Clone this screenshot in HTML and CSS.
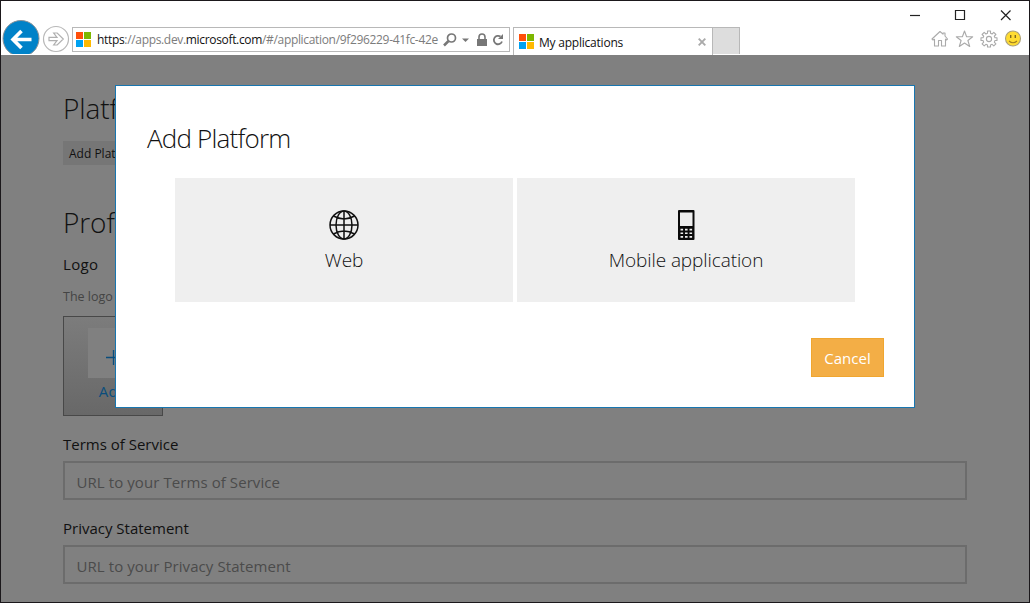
FILE: index.html
```html
<!DOCTYPE html>
<html lang="en">
<head>
<meta charset="utf-8">
<title>My applications</title>
<link rel="stylesheet" href="styles.css">
</head>
<body>
<div class="window">
  <header class="chrome">
    <svg class="back" width="38" height="34" viewBox="0 0 38 34"><circle cx="19" cy="18.5" r="18" fill="#0082c8" stroke="#8a9298" stroke-width="1"/><path d="M29.500 19.500H11.500M19.500 11L11 19.500L19.500 28" fill="none" stroke="#fff" stroke-width="3.600"/></svg>
    <svg class="forward" width="28" height="28" viewBox="0 0 28 28"><circle cx="14" cy="14" r="12.500" fill="#fff" stroke="#b8b8b8" stroke-width="1.200"/><path d="M7 12.300H15L11.700 8H15.200L21.300 14L15.200 20H11.700L15 15.700H7Z" fill="#fff" stroke="#b0b0b0" stroke-width="1.200"/></svg>
    <div class="address">
      <svg class="flag" width="15" height="15" viewBox="0 0 15 15"><path fill="#ff4f0a" d="M0 0h7v7H0z"/><path fill="#7db700" d="M8 0h7v7H8z"/><path fill="#00a1f1" d="M0 8h7v7H0z"/><path fill="#ffb900" d="M8 8h7v7H8z"/></svg>
      <div class="url"><b>https</b>://apps.dev.<b>microsoft.com</b>/#/application/9f296229-41fc-42e</div>
      <svg class="tools" width="64" height="16" viewBox="0 0 64 16" fill="none" stroke="#777"><circle cx="8.500" cy="6" r="4" stroke-width="1.700"/><path d="M5.500 9L1 13.500" stroke-width="2.500"/><path d="M19 6.500h7l-3.500 3.500z" fill="#777" stroke="none"/><path d="M34 7h10v7H34z" fill="#777" stroke="none"/><path d="M36 7.500V5a3 3 0 0 1 6 0V7.500" stroke-width="1.600"/><path d="M57.500 4.600A4.200 4.200 0 1 0 59 9.500" stroke-width="1.800"/><path d="M60 2V7H55z" fill="#777" stroke="none"/></svg>
    </div>
    <div class="tab">
      <svg class="flag" width="15" height="15" viewBox="0 0 15 15"><path fill="#ff4f0a" d="M0 0h7v7H0z"/><path fill="#7db700" d="M8 0h7v7H8z"/><path fill="#00a1f1" d="M0 8h7v7H0z"/><path fill="#ffb900" d="M8 8h7v7H8z"/></svg>
      <span class="tab-title">My applications</span>
      <svg class="tab-close" width="8" height="8" viewBox="0 0 8 8"><path d="M.7.700L7.300 7.300M7.300.7L.7 7.300" stroke="#aaa" stroke-width="1.900"/></svg>
    </div>
    <div class="new-tab"></div>
    <div class="chrome-right">
      <svg class="controls" width="105" height="12" viewBox="0 0 105 12" fill="none" stroke="#222" stroke-width="1.200"><path d="M0 6.500H10"/><path d="M45.500 1.500h9v9h-9z"/><path d="M91 1.500l9.500 9.500m0-9.500l-9.500 9.500"/></svg>
      <svg class="icons" width="92" height="18" viewBox="0 0 92 18" fill="none" stroke="#aaa" stroke-width="1.100" stroke-linejoin="round">
        <path d="M1 9L9 1.500L12 4.200V3H14V6L16.500 9L15.500 10L14.500 9.200V16H10.500V10.500H7.500V16H3.500V9.200L2 10Z"/>
        <path d="M33.500 1L35.600 6.800H41.700L36.900 10.500L38.700 16.500L33.500 13L28.300 16.500L30.100 10.500L25.300 6.800H31.400Z"/>
        <path d="M56.500 1h3v2.300l1.600.7 1.700-1.600 2.100 2.100-1.600 1.700.7 1.600H66v2.700h-2l-.7 1.600 1.600 1.700-2.100 2.100-1.700-1.600-1.600.7V17h-3v-2l-1.600-.7-1.700 1.600-2.100-2.100 1.600-1.700-.7-1.600H50V7.800h2l.7-1.600-1.600-1.700 2.100-2.100L54.900 4l1.600-.7z"/><circle cx="58" cy="9" r="2.600"/>
        <circle cx="82" cy="8.500" r="7.500" fill="#ffdc32" stroke="#aaa07a"/><path d="M79.700 5V8M84.300 5V8" stroke="#806a20" stroke-width="1.400"/><path d="M78 11Q82 14.500 86 11" stroke="#a07f20"/>
      </svg>
    </div>
  </header>
  <main class="page">
    <h1 class="section">Platforms</h1>
    <div class="add-button">Add Platform</div>
    <h1 class="section profile">Profile</h1>
    <div class="label">Logo</div>
    <div class="hint">The logo</div>
    <div class="logo-box">
      <div class="logo-plus"><svg width="15" height="17" viewBox="0 0 15 17"><path d="M0 8.500H15M7.500 1V16" stroke="#0a4d7c" stroke-width="1.300"/></svg></div>
      <span class="logo-add">Add</span>
    </div>
    <div class="label terms">Terms of Service</div>
    <div class="input"><span>URL to your Terms of Service</span></div>
    <div class="label privacy">Privacy Statement</div>
    <div class="input"><span>URL to your Privacy Statement</span></div>
  </main>
  <section class="modal">
    <h2 class="modal-title">Add Platform</h2>
    <div class="tiles">
      <div class="tile">
        <svg width="30" height="30" viewBox="0 0 30 30" fill="none" stroke="#111" stroke-width="1.500"><circle cx="15" cy="15" r="14"/><ellipse cx="15" cy="15" rx="8" ry="14"/><path d="M15 1V29M1 15H29M4.500 6Q15 12 25.500 6M4.500 24Q15 18 25.500 24"/></svg>
        <span class="tile-name">Web</span>
      </div>
      <div class="tile">
        <svg width="30" height="30" viewBox="0 0 30 30"><rect x="7" y="0" width="16.500" height="30" rx="1" fill="#0a0a0a"/><path d="M9 2.500h12.500V16H9zM9.500 18.800h2.600v1.700H9.500zM14 18.800h2.600v1.700H14zM18.500 18.800h2.600v1.700h-2.600zM9.500 22.400h2.600v1.700H9.500zM14 22.400h2.600v1.700H14zM18.500 22.400h2.600v1.700h-2.600zM9.500 26h2.600v1.700H9.500zM14 26h2.600v1.700H14zM18.500 26h2.600v1.700h-2.600z" fill="#efefef"/></svg>
        <span class="tile-name">Mobile application</span>
      </div>
    </div>
    <button class="cancel">Cancel</button>
  </section>
</div>
</body>
</html>
```
FILE: styles.css
```css
* { box-sizing: border-box; }
body { margin: 0; font-family: "Open Sans", "Noto Sans", sans-serif; color: #111; }
svg { display: block; flex: none; }
span { white-space: nowrap; }
.window { position: relative; width: 1030px; height: 603px; border: 1px solid #1b181b; background: #808080; overflow: hidden; display: flex; flex-direction: column; }
.chrome { height: 54px; flex: none; background: #fff; display: flex; align-items: flex-start; padding-left: 1px; }
.back { margin-top: 19px; }
.forward { margin: 24px 2px 0 2px; }
.address { margin-top: 26px; width: 438px; height: 25px; border: 1px solid #b8b8b8; display: flex; align-items: center; padding-left: 3px; }
.address .flag { margin-top: -1px; }
.url { width: 342px; margin-left: 6px; overflow: hidden; white-space: nowrap; font-size: 12px; line-height: 24px; letter-spacing: -.33px; color: #7c7c7c; }
.url b { font-weight: 400; color: #111; }
.tools { margin-left: 4px; }
.tab { margin: 26px 0 0 3px; width: 200px; height: 28px; border: 1px solid #b8b8b8; border-bottom: 0; display: flex; align-items: center; padding: 0 6px 0 5px; }
.tab-title { flex: 1; margin-left: 5px; padding-top: 1px; font-size: 12px; letter-spacing: -.22px; }
.new-tab { margin-top: 26px; width: 27px; height: 27px; background: #ddd; border: 1px solid #b8b8b8; border-left: 0; border-bottom: 0; }
.chrome-right { margin-left: auto; width: 119px; display: flex; flex-direction: column; }
.controls { margin-top: 8px; }
.icons { margin: 9px 0 0 21px; }
.page { padding: 32px 62px 0; }
.section { margin: 0; font-size: 28px; font-weight: 300; line-height: 42px; letter-spacing: -.1px; }
.add-button { width: 100px; height: 24px; margin-top: 12px; background: #767676; font-size: 12px; line-height: 25px; padding-left: 6px; }
.section.profile { margin-top: 36px; }
.label { font-size: 15px; line-height: 22px; }
.section + .label { margin-top: 10px; letter-spacing: .3px; }
.hint { font-size: 12.500px; line-height: 18px; margin-top: 13px; color: #444; }
.logo-box { width: 100px; height: 100px; margin-top: 10px; border: 1px solid #484848; background: linear-gradient(#7c7c7c, #686868); display: flex; flex-direction: column; align-items: center; padding-top: 11px; }
.logo-plus { width: 50px; height: 50px; background: #808080; display: flex; align-items: center; justify-content: center; padding-top: 9px; }
.logo-add { font-size: 15px; line-height: 26px; letter-spacing: .3px; color: #0a4d7c; }
.terms { margin-top: 17px; }
.privacy { margin-top: 17px; }
.input { width: 904px; height: 39px; margin-top: 6px; border: 2px solid #6c6c6c; padding: 2px 12px 0 11.500px; font-size: 15px; line-height: 34px; letter-spacing: .08px; color: #4b4b4b; }
.modal { position: absolute; left: 114px; top: 84px; width: 800px; height: 323px; border: 1px solid #1876b0; background: #fff; padding: 31px 30px 0 31px; display: flex; flex-direction: column; }
.modal-title { margin: 0; font-size: 26px; line-height: 42px; font-weight: 300; letter-spacing: -.8px; }
.tiles { display: flex; gap: 4px; padding-left: 28px; margin-top: 19px; }
.tile { width: 338px; height: 124px; background: #efefef; display: flex; flex-direction: column; align-items: center; padding-top: 32px; }
.tile-name { font-size: 19px; font-weight: 300; line-height: 26px; margin-top: 7px; letter-spacing: -.09px; }
.cancel { align-self: flex-end; width: 73px; height: 39px; margin-top: 36px; padding: 0; border: 1px solid #f0a630; background: #f3ae46; color: #fff; font-family: inherit; font-size: 15px; }
```
